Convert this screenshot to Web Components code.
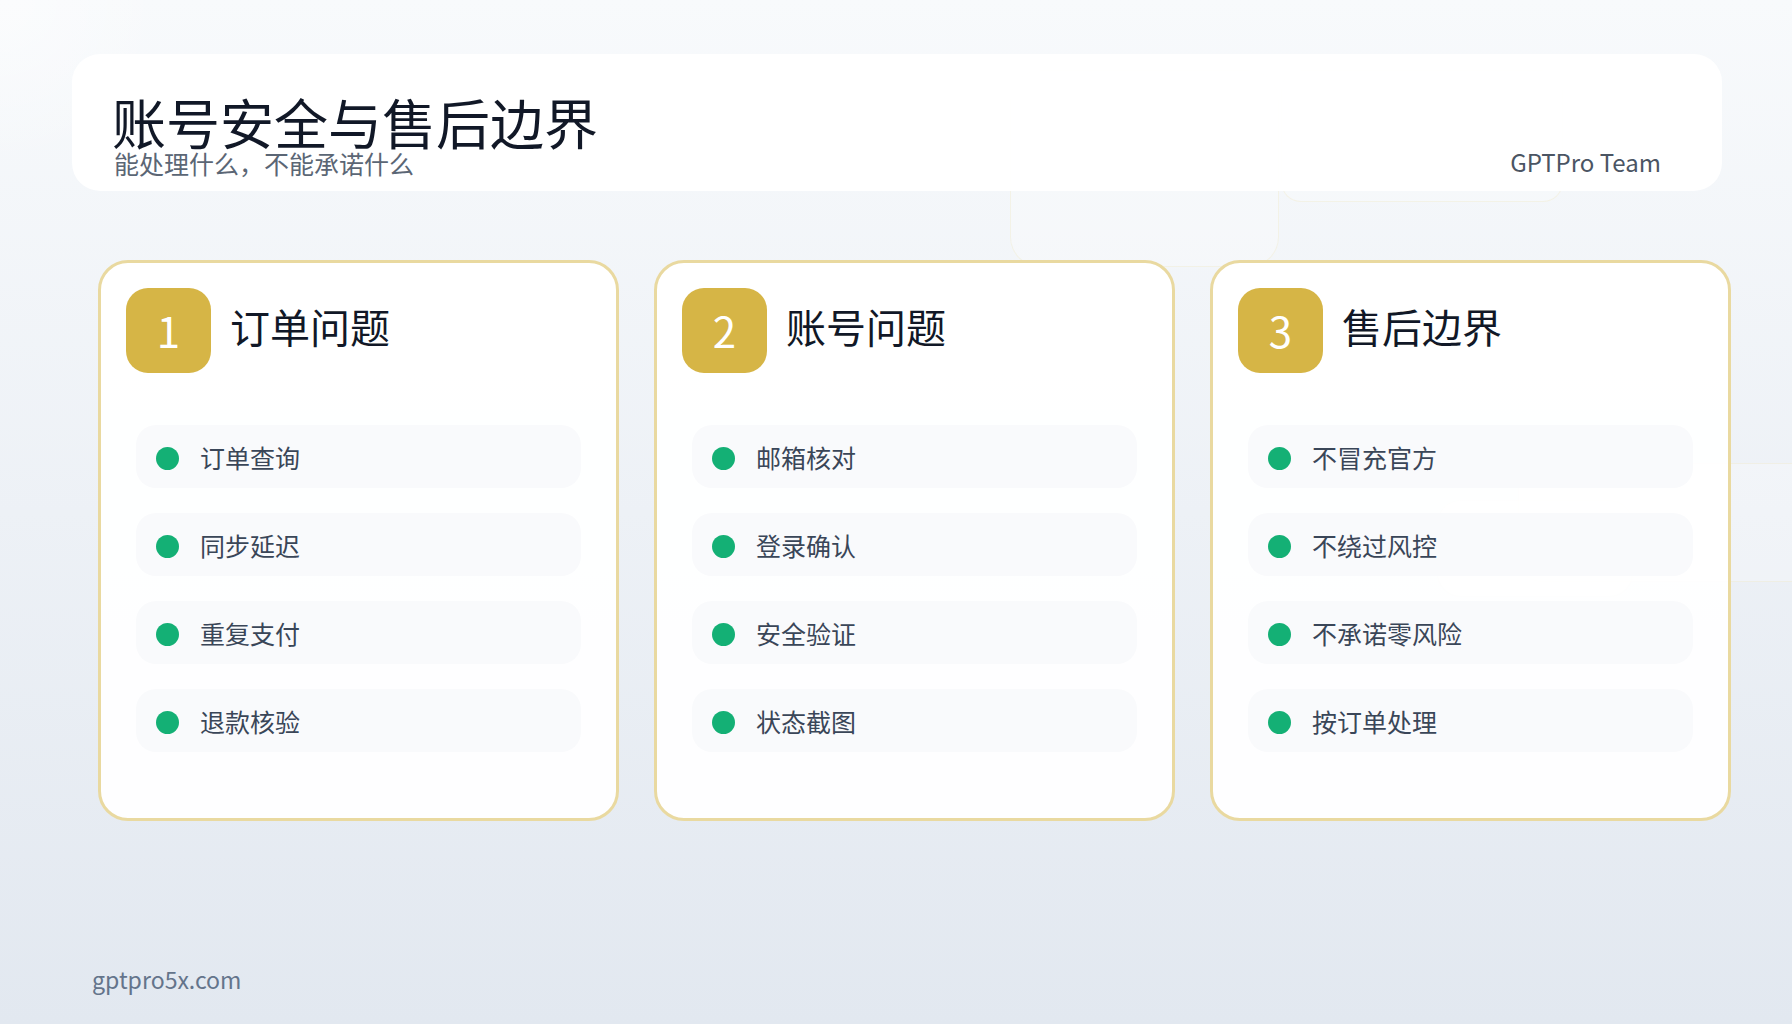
<!DOCTYPE html>
<html lang="zh-CN"><head><meta charset="utf-8"><title>账号安全与售后边界</title>
<style>
html,body{margin:0;padding:0;width:1792px;height:1024px;overflow:hidden}
body{font-family:"Noto Sans CJK SC","Noto Sans",sans-serif}
</style></head>
<body>
<slide-stage>
  <ghost-panel style="left:1010px;top:70px;width:269px;height:197px;--r:30px"></ghost-panel>
  <ghost-panel style="left:1281px;top:70px;width:282px;height:132px;--r:20px"></ghost-panel>
  <ghost-panel style="left:1518px;top:463px;width:320px;height:119px;--r:24px"></ghost-panel>
  <ghost-panel style="left:1437px;top:500px;width:196px;height:97px;--r:24px"></ghost-panel>
  <slide-header heading="账号安全与售后边界" sub="能处理什么，不能承诺什么" team="GPTPro Team"></slide-header>
  <card-grid>
    <topic-card num="1" heading="订单问题">
      <check-row>订单查询</check-row><check-row>同步延迟</check-row><check-row>重复支付</check-row><check-row>退款核验</check-row>
    </topic-card>
    <topic-card num="2" heading="账号问题">
      <check-row>邮箱核对</check-row><check-row>登录确认</check-row><check-row>安全验证</check-row><check-row>状态截图</check-row>
    </topic-card>
    <topic-card num="3" heading="售后边界">
      <check-row>不冒充官方</check-row><check-row>不绕过风控</check-row><check-row>不承诺零风险</check-row><check-row>按订单处理</check-row>
    </topic-card>
  </card-grid>
  <slide-footer>gptpro5x.com</slide-footer>
</slide-stage>
<script>
function def(name, css, html){
  customElements.define(name, class extends HTMLElement{
    constructor(){super();const r=this.attachShadow({mode:'open'});
      r.innerHTML='<style>'+css+'</style>'+html;}
    connectedCallback(){
      this.shadowRoot.querySelectorAll('[data-a]').forEach(e=>{e.textContent=this.getAttribute(e.dataset.a)||''});
    }
  });
}
def('slide-stage',`
  :host{display:block;position:relative;width:1792px;height:1024px;box-sizing:border-box;overflow:hidden;
    padding:54px 0 0 72px;
    background:radial-gradient(circle at 0 0,rgba(255,255,255,.45),rgba(255,255,255,0) 170px),linear-gradient(180deg,#f8fafc 0%,#e2e8f0 100%)}
`,`<slot></slot>`);
def('ghost-panel',`
  :host{display:block;position:absolute;box-sizing:border-box;border:1px solid rgba(234,217,160,.22);
    border-radius:var(--r,24px);background:rgba(255,255,255,.24)}
`,``);
def('slide-header',`
  :host{display:flex;position:relative;box-sizing:border-box;width:1650px;height:137px;padding:0 61px 0 42px;
    border-radius:28px;background:rgba(255,255,255,.96);justify-content:space-between;align-items:flex-start}
  .l{display:flex;flex-direction:column;padding-top:39px}
  h1{margin:0;font:400 54px/58px "Noto Sans CJK SC",sans-serif;color:#111827;margin-left:-2px}
  p{margin:-6px 0 0;font:400 25px/36px "Noto Sans CJK SC",sans-serif;color:#5b6675}
  .t{margin-top:90px;font:400 24px/36px "Noto Sans CJK SC",sans-serif;color:#4b5563}
`,`<div class="l"><h1 data-a="heading"></h1><p data-a="sub"></p></div><div class="t" data-a="team"></div>`);
def('card-grid',`
  :host{display:grid;position:relative;grid-template-columns:repeat(3,521px);column-gap:35px;margin:69px 0 0 26px;width:1633px}
`,`<slot></slot>`);
def('topic-card',`
  :host{display:block;box-sizing:border-box;height:561px;border:3px solid #e9d9a0;border-radius:30px;padding:25px;
    background:rgba(255,255,255,.94)}
  .h{display:flex;align-items:center;gap:19px}
  .b{width:85px;height:85px;border-radius:22px;background:#d6b546;color:#fff;display:flex;align-items:center;justify-content:center;
    font:400 42px/1 "Noto Sans CJK SC",sans-serif;padding-bottom:1px;box-sizing:border-box}
  h2{margin:0 0 9px;font:400 40px/56px "Noto Sans CJK SC",sans-serif;color:#111827}
  .list{display:flex;flex-direction:column;gap:25px;margin:52px 10px 0}
`,`<div class="h"><div class="b" data-a="num"></div><h2 data-a="heading"></h2></div><div class="list"><slot></slot></div>`);
def('check-row',`
  :host{display:flex;box-sizing:border-box;height:63px;align-items:center;gap:21px;padding:4px 20px 0;border-radius:20px;
    background:#f9fafc;font:400 25px/36px "Noto Sans CJK SC",sans-serif;color:#3a4658}
  i{width:23px;height:23px;border-radius:50%;background:#14b075;flex:none}
  span{margin-top:-4px}
`,`<i></i><span><slot></slot></span>`);
def('slide-footer',`
  :host{display:block;position:relative;margin:140px 0 0 20px;font:400 23.1px/36px "Noto Sans CJK SC",sans-serif;color:#64748b}
`,`<slot></slot>`);
</script>
</body></html>
